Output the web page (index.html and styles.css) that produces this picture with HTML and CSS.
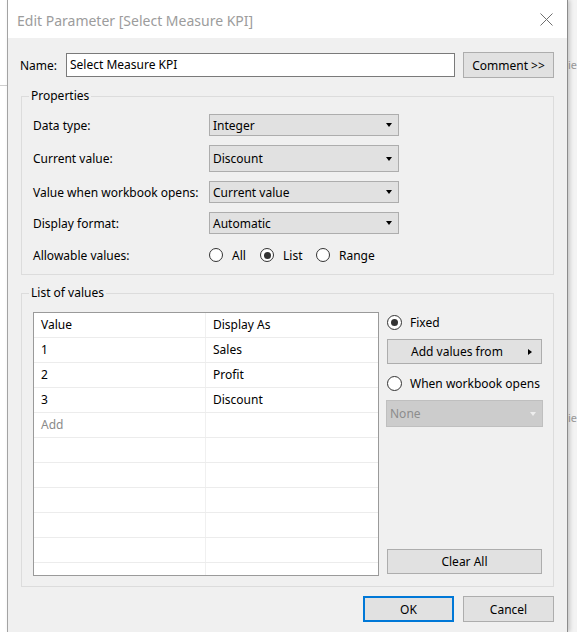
FILE: index.html
```html
<!DOCTYPE html>
<html lang="en">
<head>
    <meta charset="UTF-8">
    <title>Edit Parameter [Select Measure KPI]</title>
    <link rel="stylesheet" href="styles.css">
</head>
<body>
    <div class="screen">
        <div class="side side-left">
            <div class="side-rule"></div>
        </div>

        <div class="dialog">
            <div class="titlebar">
                <span class="title">Edit Parameter [Select Measure KPI]</span>
                <svg class="close" width="13" height="13" viewBox="0 0 13 13">
                    <path d="M0.5 0.5 L12.5 12.5 M12.5 0.5 L0.5 12.5" stroke="#6f6f6f" stroke-width="1" fill="none"/>
                </svg>
            </div>

            <div class="content">
                <div class="name-row">
                    <span class="name-label">Name:</span>
                    <div class="textbox">Select Measure KPI</div>
                    <button class="btn btn-comment">Comment &gt;&gt;</button>
                </div>

                <fieldset class="group group-props">
                    <legend>Properties</legend>
                    <div class="prop-grid">
                        <span class="prop-label">Data type:</span>
                        <div class="combo">Integer<span class="arrow-down"></span></div>

                        <span class="prop-label">Current value:</span>
                        <div class="combo">Discount<span class="arrow-down"></span></div>

                        <span class="prop-label">Value when workbook opens:</span>
                        <div class="combo">Current value<span class="arrow-down"></span></div>

                        <span class="prop-label">Display format:</span>
                        <div class="combo">Automatic<span class="arrow-down"></span></div>

                        <span class="prop-label">Allowable values:</span>
                        <div class="radio-row">
                            <span class="option opt-all"><span class="radio"></span>All</span>
                            <span class="option opt-list"><span class="radio checked"></span>List</span>
                            <span class="option"><span class="radio"></span>Range</span>
                        </div>
                    </div>
                </fieldset>

                <fieldset class="group group-list">
                    <legend>List of values</legend>
                    <div class="list-body">
                        <div class="grid">
                            <div class="grid-row"><span class="cell">Value</span><span class="cell">Display As</span></div>
                            <div class="grid-row"><span class="cell">1</span><span class="cell">Sales</span></div>
                            <div class="grid-row"><span class="cell">2</span><span class="cell">Profit</span></div>
                            <div class="grid-row"><span class="cell">3</span><span class="cell">Discount</span></div>
                            <div class="grid-row"><span class="cell cell-add">Add</span><span class="cell"></span></div>
                            <div class="grid-row"><span class="cell"></span><span class="cell"></span></div>
                            <div class="grid-row"><span class="cell"></span><span class="cell"></span></div>
                            <div class="grid-row"><span class="cell"></span><span class="cell"></span></div>
                            <div class="grid-row"><span class="cell"></span><span class="cell"></span></div>
                            <div class="grid-row"><span class="cell"></span><span class="cell"></span></div>
                            <div class="grid-row"><span class="cell"></span><span class="cell"></span></div>
                        </div>

                        <div class="list-side">
                            <span class="option side-option"><span class="radio checked"></span>Fixed</span>
                            <button class="btn btn-add">Add values from<span class="arrow-right"></span></button>
                            <span class="option side-option side-option-2"><span class="radio"></span>When workbook opens</span>
                            <div class="combo combo-disabled">None<span class="arrow-down"></span></div>
                            <button class="btn btn-clear">Clear All</button>
                        </div>
                    </div>
                </fieldset>

                <div class="footer">
                    <button class="btn btn-ok">OK</button>
                    <button class="btn">Cancel</button>
                </div>
            </div>
        </div>

        <div class="side side-right">
            <span class="peek peek-1">ie</span>
            <span class="peek peek-2">ie</span>
        </div>
    </div>
</body>
</html>
```

FILE: styles.css
```css
body {
    margin: 0;
    padding: 0;
    background-color: #fff;
    font-family: 'Noto Sans', 'Open Sans', sans-serif;
    font-size: 12px;
    color: #000;
}

.screen {
    display: flex;
    width: 577px;
    height: 632px;
    overflow: hidden;
}

/* what shows around the dialog */
.side-left {
    width: 7px;
    flex-shrink: 0;
    padding-top: 85px;
    background-color: #fff;
}

.side-rule {
    height: 1px;
    background-color: #cfcfcf;
}

.side-right {
    flex: 1;
    display: flex;
    flex-direction: column;
    overflow: hidden;
    background-color: #f3f3f3;
    color: #9a9a9a;
    font-size: 11px;
    white-space: nowrap;
}

.peek {
    line-height: 16px;
}

.peek-1 {
    margin-top: 57px;
}

.peek-2 {
    margin-top: 337px;
}

/* dialog window */
.dialog {
    width: 559px;
    flex-shrink: 0;
    display: flex;
    flex-direction: column;
    border-left: 1px solid #a3a3a3;
    border-right: 1px solid #8c8c8c;
    background-color: #f0f0f0;
    box-shadow: 2px 0 4px rgba(0, 0, 0, 0.18);
    position: relative;
    z-index: 1;
}

.titlebar {
    height: 38px;
    display: flex;
    align-items: center;
    justify-content: space-between;
    padding: 0 14px 0 9px;
    background-color: #fff;
}

.title {
    font-size: 14px;
    color: #9c9c9c;
    margin-top: 2px;
}

.content {
    padding: 14px 13px 0 12px;
}

.name-row {
    display: flex;
    align-items: center;
    height: 26px;
}

.name-label {
    width: 46px;
}

.textbox {
    flex: 1;
    height: 22px;
    line-height: 22px;
    padding-left: 3px;
    border: 1px solid #7a7a7a;
    background-color: #fff;
}

.btn {
    font-family: inherit;
    font-size: 12px;
    color: #000;
    height: 26px;
    width: 91px;
    padding: 0;
    background-color: #e1e1e1;
    border: 1px solid #adadad;
}

.btn-comment {
    margin-left: 8px;
}

/* group boxes */
.group {
    margin: 10px 0 0 1px;
    padding: 10px 11px 7px 11px;
    border: 1px solid #dcdcdc;
}

.group legend {
    margin-left: -4px;
    padding: 0 2px;
    line-height: 16px;
}

.prop-grid {
    display: grid;
    grid-template-columns: 176px 190px;
    grid-template-rows: 22px 27px 22px 22px 24px;
    row-gap: 9px;
    align-items: center;
}

.combo {
    height: 100%;
    box-sizing: border-box;
    display: flex;
    align-items: center;
    justify-content: space-between;
    padding: 0 6px 0 3px;
    background-color: #e1e1e1;
    border: 1px solid #adadad;
}

.arrow-down {
    width: 0;
    height: 0;
    border-left: 3.5px solid transparent;
    border-right: 3.5px solid transparent;
    border-top: 4px solid #000;
}

.arrow-right {
    width: 0;
    height: 0;
    border-top: 3.5px solid transparent;
    border-bottom: 3.5px solid transparent;
    border-left: 4px solid #000;
}

.radio-row {
    display: flex;
    align-items: center;
}

.option {
    display: flex;
    align-items: center;
    gap: 9px;
}

.opt-all {
    width: 51px;
}

.opt-list {
    width: 56px;
}

.radio {
    width: 12px;
    height: 12px;
    border: 1px solid #333;
    border-radius: 50%;
    background-color: #fff;
    display: flex;
    align-items: center;
    justify-content: center;
}

.radio.checked::after {
    content: '';
    width: 7px;
    height: 7px;
    border-radius: 50%;
    background-color: #333;
}

/* list of values */
.group-list {
    padding-top: 11px;
    padding-bottom: 10px;
}

.list-body {
    display: flex;
    gap: 8px;
}

.grid {
    width: 344px;
    height: 262px;
    overflow: hidden;
    border: 1px solid #9a9a9a;
    background-color: #fff;
}

.grid-row {
    display: grid;
    grid-template-columns: 171px 172px;
    column-gap: 1px;
    height: 24px;
    background-color: #f0f0f0;
    border-bottom: 1px solid #ececec;
}

.cell {
    background-color: #fff;
    line-height: 24px;
    padding-left: 7px;
}

.cell-add {
    color: #8a8a8a;
}

.list-side {
    flex: 1;
    display: flex;
    flex-direction: column;
}

.side-option {
    height: 20px;
    gap: 8px;
}

.side-option .radio {
    width: 13px;
    height: 13px;
}

.btn-add {
    width: 100%;
    height: 25px;
    margin-top: 7px;
    display: flex;
    align-items: center;
    justify-content: space-between;
    padding: 0 9px 0 23px;
}

.side-option-2 {
    margin-top: 9px;
}

.combo-disabled {
    height: 27px;
    margin: 7px -1px 0 -1px;
    color: #8d8d8d;
    background-color: #cccccc;
    border-color: #bfbfbf;
}

.combo-disabled .arrow-down {
    border-top-color: #eeeeee;
}

.btn-clear {
    width: 100%;
    height: 25px;
    margin-top: auto;
    margin-bottom: 2px;
}

.footer {
    display: flex;
    justify-content: flex-end;
    gap: 9px;
    margin-top: 9px;
}

.btn-ok {
    border: 2px solid #0078d7;
}
```
